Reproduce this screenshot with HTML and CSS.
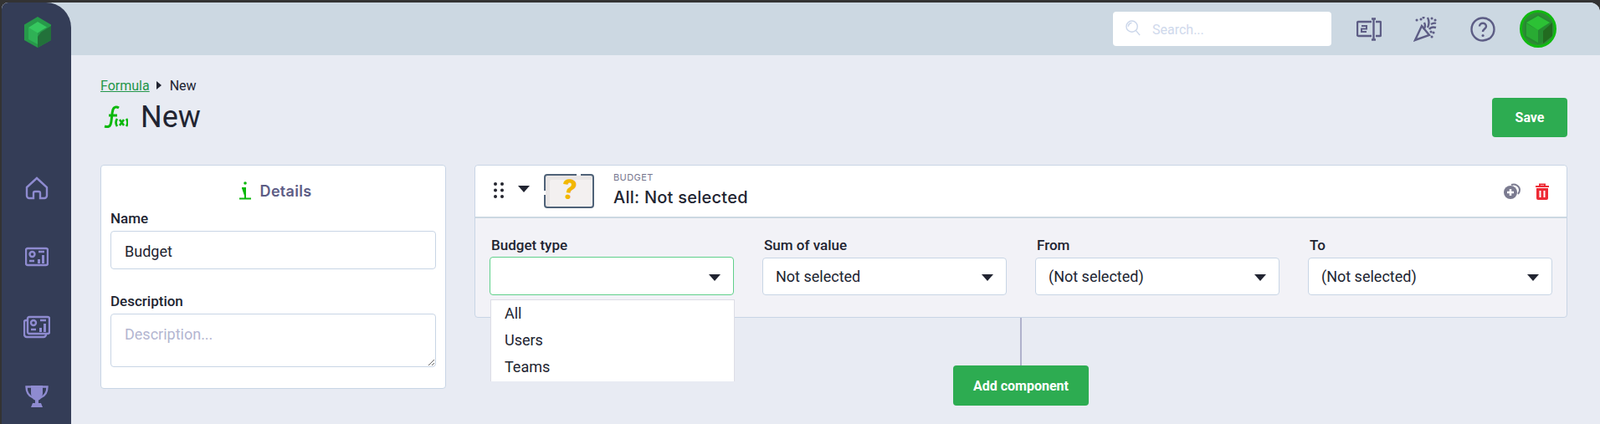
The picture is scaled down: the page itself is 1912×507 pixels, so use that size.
FILE: index.html
```html
<!DOCTYPE html>
<html lang="en">
<head>
<meta charset="utf-8">
<title>Formula - New</title>
<link rel="stylesheet" href="styles.css">
</head>
<body>
<div class="app">
  <div class="rail">
    <aside class="sidebar">
      <svg class="logo" viewBox="0 0 32 37"><polygon fill="#27994a" points="16,0 32,9.5 32,28 16,37 0,28 0,9.5"/><polygon fill="#2fb155" points="5,13 16,19 16,33 5,27"/><polygon fill="#36c75f" points="16,6 27,12.5 21,16 16,19.5 5,13"/><polygon fill="#22713a" points="32,11 32,28 16,37 16,33 16,24 20,18.5"/></svg>
      <nav class="nav">
        <a class="nav-item"><svg class="nav-icon" viewBox="0 0 28 28"><path d="M2 13 14 2l12 11v10a3 3 0 0 1-3 3h-5v-6a2 2 0 0 0-2-2h-4a2 2 0 0 0-2 2v6H5a3 3 0 0 1-3-3z"/></svg></a>
        <a class="nav-item"><svg class="nav-icon" viewBox="0 0 28 24"><rect x="1" y="1" width="26" height="20" rx="2"/><circle cx="8.500" cy="8" r="3"/><path d="M5 16h6M16 5h7"/><path class="solid" d="M15 14h3v5h-3zM20 9h3v10h-3z"/></svg></a>
        <a class="nav-item"><svg class="nav-icon wide" viewBox="0 0 32 26"><rect x="5" y="1" width="26" height="20" rx="2"/><path d="M5 5H3a2 2 0 0 0-2 2v15a3 3 0 0 0 3 3h20a3 3 0 0 0 3-3v-1"/><circle cx="12" cy="8" r="3"/><path d="M9 16h6M20 5h7"/><path class="solid" d="M19 14h3v5h-3zM24 9h3v10h-3z"/></svg></a>
        <a class="nav-item"><svg class="nav-icon" viewBox="0 0 28 28"><path class="fill" d="M7 1h14v9c0 5-3 8-5 8.500v3.500h3l2 5H7l2-5h3v-3.500C10 18 7 15 7 10z"/><path d="M7 2.500H1.500c0 7 3 11 8 13M21 2.500h5.500c0 7-3 11-8 13"/></svg></a>
      </nav>
    </aside>
  </div>
  <div class="main">
    <header class="topbar">
      <div class="search">
        <svg class="search-icon" viewBox="0 0 20 22"><circle cx="8" cy="8" r="7"/><path d="M3.500 8a4.500 4.500 0 0 1 4.500-4.500M13 13l5 6"/></svg>
        <input class="search-input" type="text" placeholder="Search...">
      </div>
      <svg class="top-icon i-rename" viewBox="0 0 30 28"><path d="M18 5H2.500A1.500 1.500 0 0 0 1 6.500v14A1.500 1.500 0 0 0 2.500 22H18M23 5h5a1 1 0 0 1 1 1v15a1 1 0 0 1-1 1h-5M18 1.500h5M18 26.500h5M20.500 1.500v25"/><path class="t2" d="M6 10h6v3.500H6V17h6"/></svg>
      <svg class="top-icon i-party" viewBox="0 0 28 30"><path d="M10 11 2 28l17-6z"/><path d="M13 7c2 4 0 7-1 8M17 1c2 4 2 8 0 12M19 15c2-3 5-3 8-2M21 9c2-1 4-2 6-1"/><path class="dots" d="M4 4h.1M9 3h.1M12 1h.1M22 2h.1M26 4h.1M21 18h.1M22 24h.1M24 19h.1"/></svg>
      <svg class="top-icon i-help" viewBox="0 0 30 30"><circle cx="15" cy="15" r="13.500"/><path d="M11 11.500c0-5 8-5 8 0 0 3-4 3-4 6.500"/><path class="dots" d="M15 22.500h.1"/></svg>
      <svg class="avatar" viewBox="0 0 44 45"><ellipse cx="22" cy="22.500" rx="20.500" ry="21" fill="#2e8b35" stroke="#10b910" stroke-width="3"/><polygon fill="#258a30" points="22,5 38,14 38,32 22,41 6,32 6,14"/><polygon fill="#29ab33" points="8,16 22,24 22,39 8,31"/><polygon fill="#2cc135" points="22,7 36,15 28,20 22,24 8,15"/><polygon fill="#226b20" points="39,15 39,31 28,40 28,25"/></svg>
    </header>
    <main class="content">
      <div class="head">
        <div>
          <div class="crumbs"><a class="crumb-link">Formula</a><span class="crumb-arrow"></span><span>New</span></div>
          <h1 class="title"><svg class="fx" viewBox="0 0 30 30"><path d="M19 4c-3-2-6-1-7 2-2 6-1 13-3 18-1 3-4 3-7 2M7 13h10"/><path class="fx-x" d="M17 17c-2 3-2 6 0 9M28 17c2 3 2 6 0 9M20 18l5 7M25 18l-5 7"/></svg><span>New</span></h1>
        </div>
        <button class="btn btn-save">Save</button>
      </div>
      <div class="columns">
        <section class="details">
          <div class="details-title"><svg class="info" viewBox="0 0 14 22"><circle cx="7" cy="2" r="1.800"/><path d="M3 8h4v12M0 20.500h14"/></svg><span>Details</span></div>
          <label class="field-label">Name</label>
          <input class="text-input" type="text" value="Budget">
          <label class="field-label second">Description</label>
          <textarea class="text-area" placeholder="Description..."></textarea>
        </section>
        <div class="builder">
          <section class="card">
            <div class="card-head">
              <svg class="drag" viewBox="0 0 12 19"><g fill="#24252f"><circle cx="2" cy="2" r="2"/><circle cx="10" cy="2" r="2"/><circle cx="2" cy="9.500" r="2"/><circle cx="10" cy="9.500" r="2"/><circle cx="2" cy="17" r="2"/><circle cx="10" cy="17" r="2"/></g></svg>
              <span class="caret big"></span>
              <div class="qbox"><span class="qmark">?</span></div>
              <div class="card-heading">
                <div class="eyebrow">BUDGET</div>
                <div class="card-title">All: Not selected</div>
              </div>
              <div class="card-actions">
                <svg class="act-add" viewBox="0 0 20 19"><path class="arc" d="M9 2c5-2 10 2 10 6 0 2-1 4-2 5"/><circle cx="8" cy="11" r="8" fill="#7b7b90"/><path d="M4 11h8M8 7v8" stroke="#fff" stroke-width="2.500"/></svg>
                <svg class="act-del" viewBox="0 0 16 20"><path fill="#ee2a35" d="M1 6h14v12a2 2 0 0 1-2 2H3a2 2 0 0 1-2-2z"/><path d="M0 4h16M5 4V1.500h6V4" stroke="#ee2a35" stroke-width="2" fill="none"/><path d="M5.500 9v8M10.500 9v8" stroke="#fff" stroke-width="2"/></svg>
              </div>
            </div>
            <div class="card-body">
              <div class="sel-col">
                <label class="field-label">Budget type</label>
                <div class="select focus"><span class="caret"></span>
                  <ul class="menu"><li>All</li><li>Users</li><li>Teams</li></ul>
                </div>
              </div>
              <div class="sel-col">
                <label class="field-label">Sum of value</label>
                <div class="select"><span>Not selected</span><span class="caret"></span></div>
              </div>
              <div class="sel-col">
                <label class="field-label">From</label>
                <div class="select"><span>(Not selected)</span><span class="caret"></span></div>
              </div>
              <div class="sel-col">
                <label class="field-label">To</label>
                <div class="select"><span>(Not selected)</span><span class="caret"></span></div>
              </div>
            </div>
          </section>
          <div class="add-wrap">
            <div class="connector"></div>
            <button class="btn btn-add">Add component</button>
          </div>
        </div>
      </div>
    </main>
  </div>
</div>
</body>
</html>
```
FILE: styles.css
```css
* { box-sizing: border-box; }
html, body { margin: 0; height: 100%; overflow: hidden; }
body {
  background: #333333;
  padding: 3px 0 0 2px;
  font-family: Roboto, "Liberation Sans", sans-serif;
  color: #212431;
}
.app {
  display: flex;
  height: 504px;
  border-radius: 8px 12px 0 0;
  overflow: hidden;
  background: #e8ebf3;
}
.rail { width: 83px; flex: none; background: #ccd8e2; }
.sidebar {
  height: 100%;
  background: #343d57;
  border-top-right-radius: 30px;
  padding-top: 17px;
  display: flex;
  flex-direction: column;
  align-items: center;
}
.logo { width: 32px; height: 37px; margin-left: 3px; flex: none; }
.nav { margin-top: 126px; display: flex; flex-direction: column; }
.nav-item { height: 83px; display: flex; align-items: center; justify-content: center; margin-left: 1px; }
.nav-icon { width: 28px; height: 28px; fill: none; stroke: #8e8bd0; stroke-width: 2.400; }
.nav-icon.wide { width: 32px; }
.nav-icon .solid { fill: #8e8bd0; stroke: none; }
.nav-icon .fill { fill: #8e8bd0; stroke: none; }
.main { flex: 1; min-width: 0; display: flex; flex-direction: column; }
.topbar {
  height: 63px;
  flex: none;
  background: #ccd8e2;
  display: flex;
  align-items: center;
  justify-content: flex-end;
  padding: 0 52px 0 0;
}
.search {
  width: 261px;
  height: 41px;
  background: #fff;
  border-radius: 4px;
  display: flex;
  align-items: center;
  padding-left: 15px;
  margin-right: 30px;
  margin-top: -1px;
}
.search-icon { width: 19px; height: 21px; fill: none; stroke: #cbd6ea; stroke-width: 1.500; flex: none; }
.search-input {
  border: 0;
  outline: 0;
  background: none;
  margin: 2px 0 0 13px;
  width: 180px;
  font: 16px Roboto, sans-serif;
  padding: 0;
}
.search-input::placeholder { color: #cfd9ec; opacity: 1; }
.top-icon { fill: none; stroke: #5d5d85; stroke-width: 2.400; flex: none; }
.top-icon .dots { stroke-width: 3; stroke-linecap: round; }
.i-rename { width: 30px; height: 28px; margin-right: 38px; }
.i-rename .t2 { stroke-width: 2; }
.i-party { width: 28px; height: 30px; margin-right: 40px; }
.i-help { width: 30px; height: 30px; margin-right: 29px; }
.avatar { width: 44px; height: 45px; flex: none; }
.content { flex: 1; padding: 26px 39px 0 35px; }
.head { display: flex; justify-content: space-between; height: 105px; }
.crumbs { display: flex; align-items: center; height: 20px; font-size: 16px; }
.crumb-link { color: #23964a; text-decoration: underline; }
.crumb-arrow {
  width: 0; height: 0; margin: 0 10px 0 8px;
  border-left: 6px solid #212431;
  border-top: 5px solid transparent;
  border-bottom: 5px solid transparent;
}
.title {
  margin: 4px 0 0;
  display: flex;
  align-items: center;
  font-size: 36px;
  font-weight: 400;
  line-height: 48px;
}
.fx { width: 30px; height: 30px; margin: 0 15px 0 3px; fill: none; stroke: #0ab80a; stroke-width: 3; }
.fx .fx-x { stroke-width: 2.600; }
.btn {
  background: #2dac51;
  color: #fff;
  border: 0;
  border-radius: 4px;
  font: 700 16px Roboto, sans-serif;
}
.btn-save { width: 90px; height: 47px; margin-top: 25px; margin-right: 0; }
.columns { display: flex; gap: 34px; align-items: flex-start; }
.details {
  width: 413px;
  height: 268px;
  flex: none;
  background: #fff;
  border: 1px solid #c8d5e5;
  border-radius: 4px;
  padding: 15px 11px 0;
}
.details-title {
  display: flex;
  align-items: center;
  justify-content: center;
  gap: 11px;
  height: 30px;
  font: 600 18px Inter, sans-serif;
  letter-spacing: .3px;
  color: #5d5d85;
  margin: 0 0 1px 5px;
}
.info { width: 14px; height: 22px; fill: #0ab80a; stroke: #0ab80a; stroke-width: 2; }
.info circle { stroke: none; }
.field-label {
  display: block;
  font-size: 17px;
  font-weight: 500;
  line-height: 20px;
  color: #212431;
}
.details .field-label { margin-top: 8px; margin-bottom: 5px; }
.details .field-label.second { margin-top: 28px; }
.text-input, .text-area {
  display: block;
  width: 100%;
  background: #fff;
  border: 1px solid #c8d5e5;
  border-radius: 4px;
  font: 18px Roboto, sans-serif;
  color: #212431;
  padding: 0 16px;
  outline: 0;
}
.text-input { height: 46px; padding-top: 2px; }
.text-area { height: 64px; padding-top: 13px; padding-bottom: 0; resize: vertical; }
.text-area::placeholder { color: #b4b6d1; opacity: 1; }
.builder { flex: 1; min-width: 0; }
.card {
  height: 183px;
  border: 1px solid #c8d5e5;
  border-radius: 4px;
  background: #f2f2f7;
}
.card-head {
  height: 63px;
  background: #fff;
  border-bottom: 2px solid #ccd8e2;
  border-radius: 4px 4px 0 0;
  display: flex;
  align-items: center;
  padding: 0 21px 0 22px;
}
.drag { width: 12px; height: 19px; flex: none; margin-top: -3px; }
.caret {
  display: inline-block;
  width: 0; height: 0;
  border-top: 8px solid #212431;
  border-left: 7px solid transparent;
  border-right: 7px solid transparent;
  margin-left: auto;
  margin-top: 3px;
  flex: none;
}
.caret.big { margin: -6px 0 0 17px; }
.qbox {
  position: relative;
  width: 60px;
  height: 41px;
  margin-left: 17px;
  background: #f3f0f0;
  border: 2px solid #4f6278;
  border-radius: 4px;
  box-shadow: inset 5px 5px 0 #e9e6e6;
  display: flex;
  align-items: center;
  justify-content: center;
  flex: none;
}
.qbox::before {
  content: "";
  position: absolute;
  top: -2px;
  right: 14px;
  width: 5px;
  height: 2px;
  background: #fff;
}
.qbox::after {
  content: "";
  position: absolute;
  top: 18px;
  left: -2px;
  width: 2px;
  height: 5px;
  background: #fff;
}
.qmark { font: 900 33px/1 Roboto, sans-serif; color: #f2b705; transform: translateY(-2px) rotate(8deg); }
.card-heading { margin-left: 23px; margin-top: -3px; }
.eyebrow { font: 400 11px/14px Inter, sans-serif; color: #77778f; letter-spacing: .4px; margin-bottom: 4px; }
.card-title { font: 500 20px/26px Inter, sans-serif; letter-spacing: .25px; color: #212431; }
.card-actions { margin-left: auto; display: flex; align-items: center; gap: 18px; }
.act-add { width: 20px; height: 19px; }
.act-add .arc { fill: none; stroke: #7b7b90; stroke-width: 2; }
.act-del { width: 16px; height: 20px; }
.card-body {
  display: grid;
  grid-template-columns: repeat(4, 292px);
  gap: 34px;
  padding: 22px 16px 0 17px;
}
.card-body .field-label { margin-bottom: 5px; padding-left: 2px; }
.select {
  position: relative;
  height: 45px;
  background: #fff;
  border: 1px solid #c8d5e5;
  border-radius: 4px;
  display: flex;
  align-items: center;
  padding: 0 15px;
  font-size: 18px;
}
.select.focus { border-color: #5fd08a; height: 46px; margin-top: -1px; }
.menu {
  position: absolute;
  top: 50px;
  left: 0;
  width: 292px;
  height: 98px;
  margin: 0;
  padding: 0;
  list-style: none;
  background: #fff;
  border: 1px solid #dcdde5;
  border-bottom: 0;
  overflow: hidden;
}
.menu li { height: 32px; line-height: 32px; padding-left: 16px; }
.add-wrap { display: flex; flex-direction: column; align-items: center; }
.connector { width: 2px; height: 57px; background: #b0b2cc; }
.btn-add { width: 162px; height: 48px; }
```
